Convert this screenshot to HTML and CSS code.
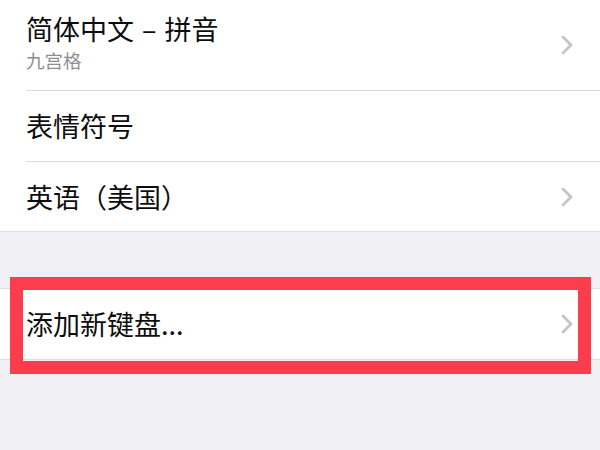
FILE: index.html
```html
<!DOCTYPE html>
<html lang="zh-CN">
<head>
<meta charset="utf-8">
<link rel="stylesheet" href="styles.css">
</head>
<body>
<div class="group first">
  <div class="row">
    <div class="inner tall">
      <div class="label">
        <div class="title">简体中文 <span class="dash">–</span> 拼音</div>
        <div class="sub">九宫格</div>
      </div>
      <svg class="chev" viewBox="0 0 12 20" width="12" height="20"><path d="M2 2 L10 10 L2 18" /></svg>
    </div>
  </div>
  <div class="row">
    <div class="inner">
      <div class="title">表情符号</div>
    </div>
  </div>
  <div class="row">
    <div class="inner last">
      <div class="title">英语（美国）</div>
      <svg class="chev" viewBox="0 0 12 20" width="12" height="20"><path d="M2 2 L10 10 L2 18" /></svg>
    </div>
  </div>
</div>
<div class="group second">
  <div class="row">
    <div class="inner last">
      <div class="title">添加新键盘...</div>
      <svg class="chev" viewBox="0 0 12 20" width="12" height="20"><path d="M2 2 L10 10 L2 18" /></svg>
    </div>
  </div>
  <div class="highlight"></div>
</div>
</body>
</html>
```
FILE: styles.css
```css
html, body {
  margin: 0;
  padding: 0;
}
body {
  background: #efeff4;
  font-family: "Noto Sans CJK SC", "Noto Sans", sans-serif;
  color: #0d0d0d;
  width: 600px;
  height: 450px;
  overflow: hidden;
}
.group {
  background: #fff;
  border-bottom: 1px solid #dcdce0;
}
.group.second {
  position: relative;
  margin-top: 56px;
  border-top: 1px solid #dcdce0;
}
.row {
  padding-left: 26px;
}
.inner {
  display: flex;
  align-items: center;
  justify-content: space-between;
  height: 70px;
  padding-right: 27px;
  border-bottom: 1px solid #dcdce0;
}
.inner.tall {
  height: 90px;
}
.inner.last {
  border-bottom: none;
  height: 69px;
}
.second .inner.last {
  height: 70px;
}
.label {
  display: flex;
  flex-direction: column;
  gap: 4px;
  padding-bottom: 6px;
}
.title {
  font-size: 27px;
  line-height: 32px;
  white-space: nowrap;
}
.dash {
  margin: 0 2px;
}
.sub {
  font-size: 18.5px;
  line-height: 22px;
  color: #8e8e93;
}
.chev {
  flex: none;
}
.chev path {
  fill: none;
  stroke: #c4c4c9;
  stroke-width: 2.8;
  stroke-linecap: round;
  stroke-linejoin: round;
}
.highlight {
  position: absolute;
  top: -12px;
  left: 10px;
  right: 9px;
  bottom: -15px;
  border: 13px solid #fc3d4e;
}
```
